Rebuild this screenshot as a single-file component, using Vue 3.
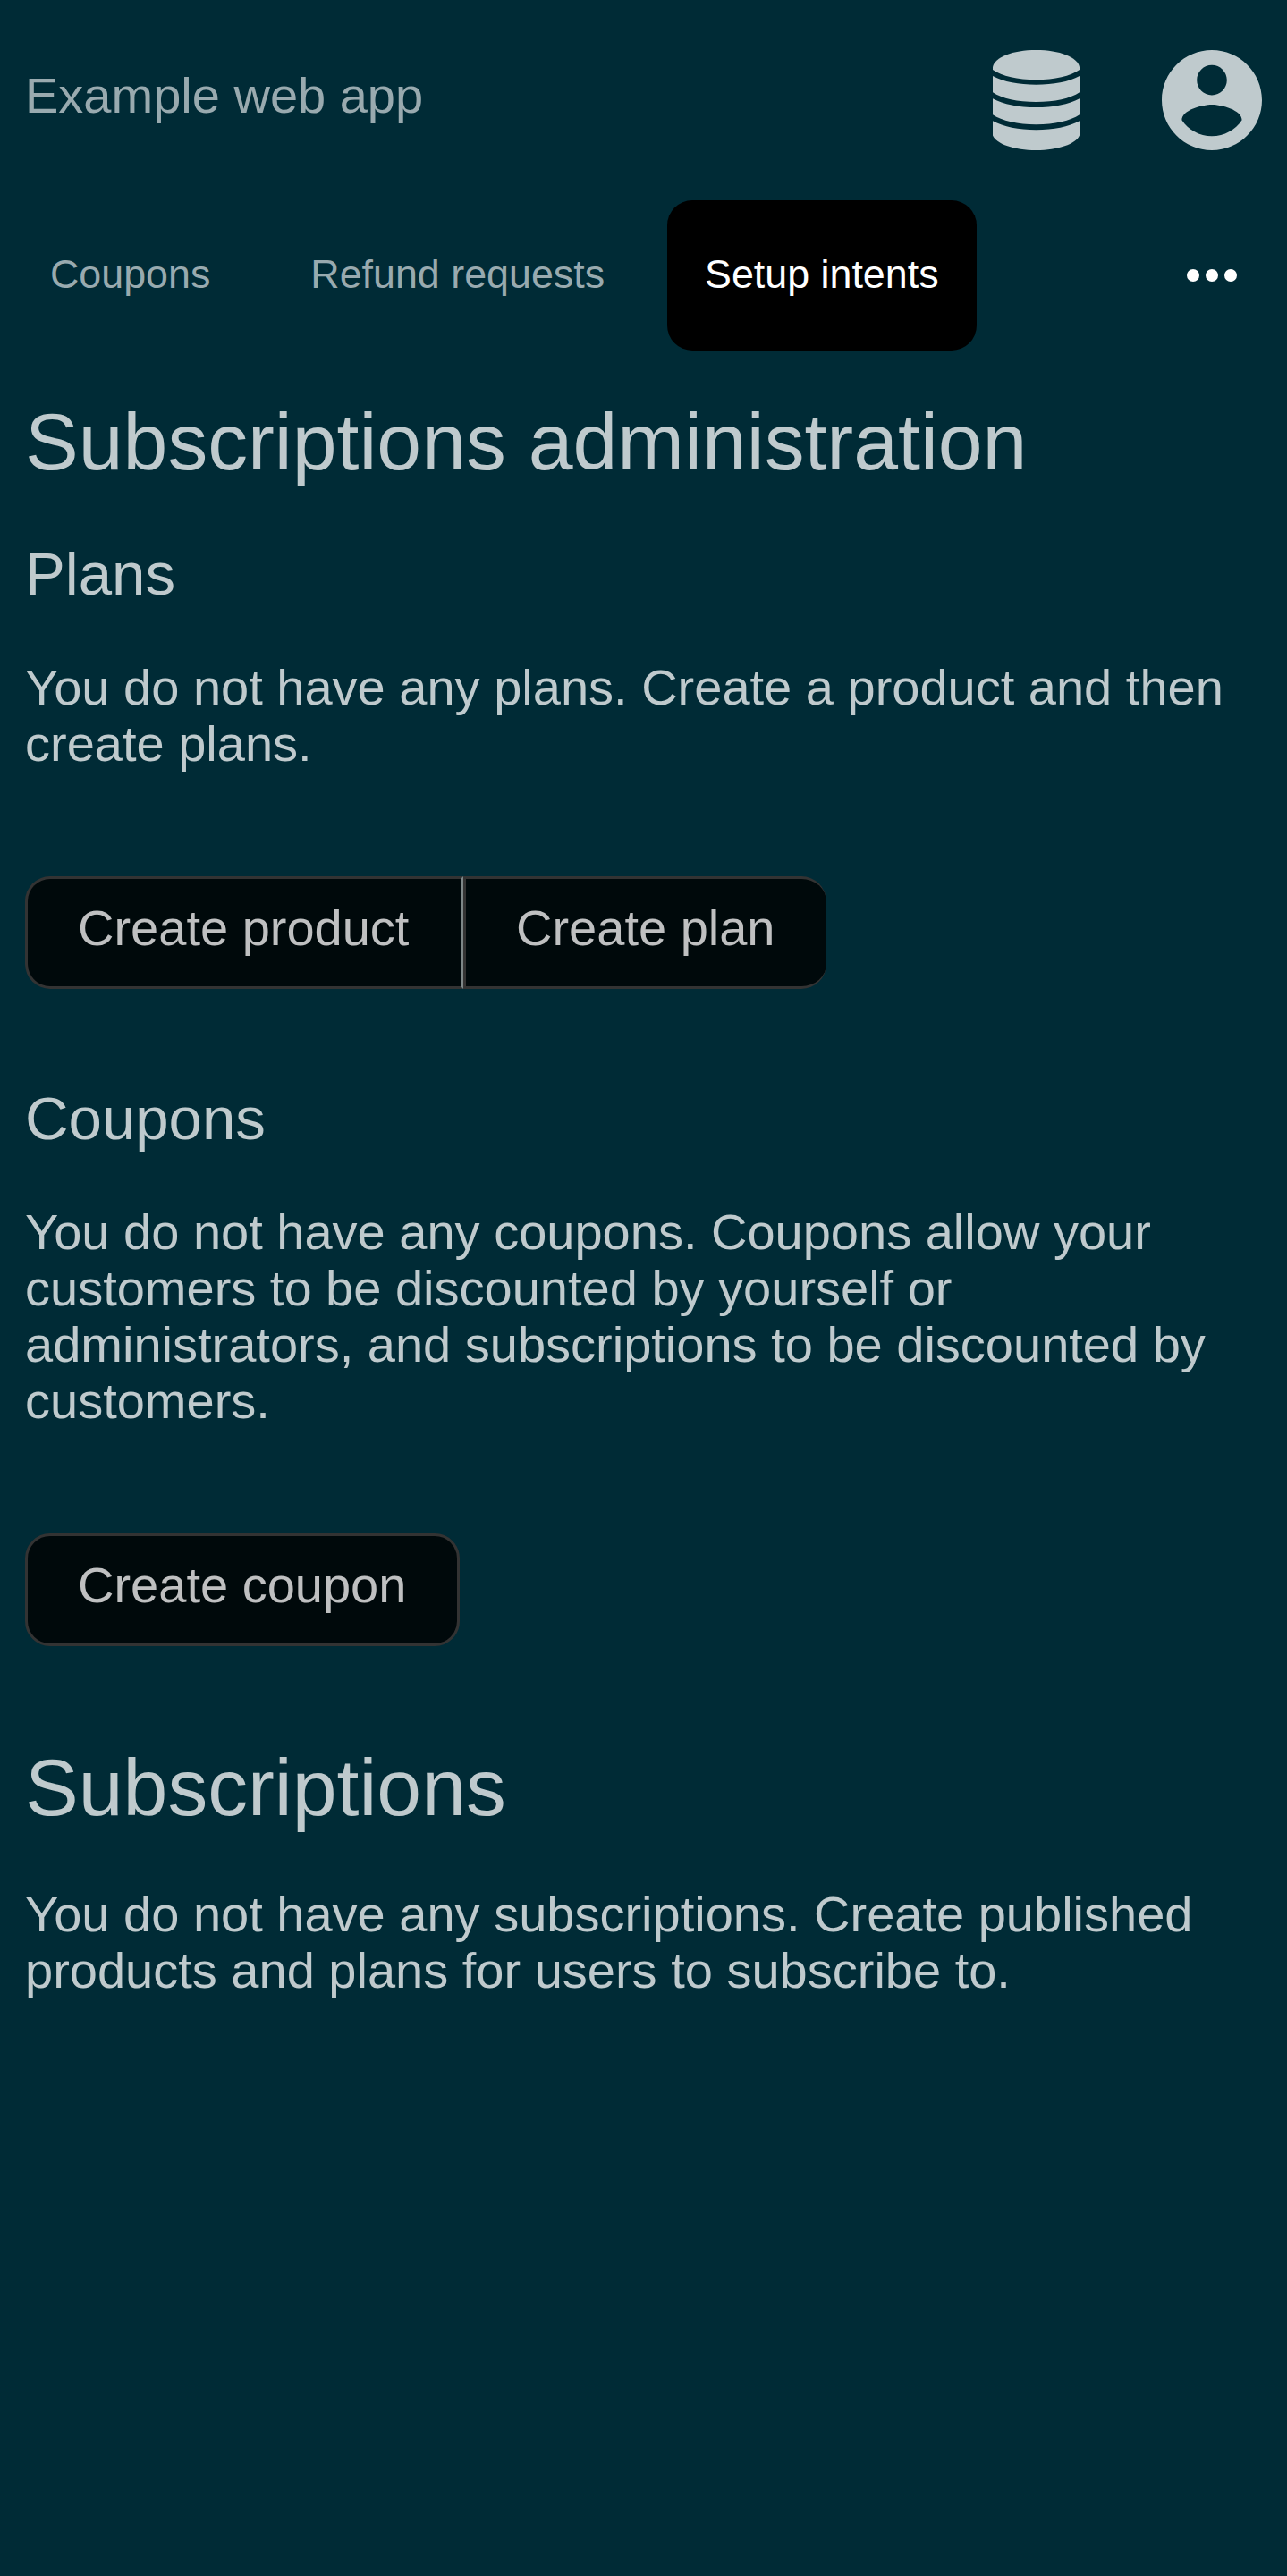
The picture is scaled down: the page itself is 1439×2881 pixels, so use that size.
<script setup>
const navItems = [
  { label: 'Coupons', active: false },
  { label: 'Refund requests', active: false },
  { label: 'Setup intents', active: true },
]
</script>

<template>
  <div class="app">
    <header class="header">
      <span class="brand">Example web app</span>
      <div class="icons">
        <svg class="db" viewBox="0 0 97 112">
          <g fill="currentColor">
            <path d="M0 19C2 8 22 0 48.5 0S95 8 97 19V22C87 29 69 33.3 48.5 33.3S10 29 0 22Z" />
            <path d="M0 29C12 35.500 29 38.700 48.500 38.700S85 35.500 97 29V47.200C87 54 69 58 48.500 58S10 54 0 47.200Z" />
            <path d="M0 54.200C12 60.700 29 64 48.500 64S85 60.700 97 54.200V72.300C87 79 69 83.200 48.500 83.200S10 79 0 72.300Z" />
            <path d="M0 79.300C12 85.800 29 89.200 48.500 89.200S85 85.800 97 79.300V95.500C93 105 73 112 48.500 112S4 105 0 95.500Z" />
          </g>
        </svg>
        <svg class="user" viewBox="2 2 20 20"><path fill="currentColor" d="M12 2C6.480 2 2 6.480 2 12s4.480 10 10 10 10-4.480 10-10S17.520 2 12 2zm0 3c1.660 0 3 1.340 3 3s-1.340 3-3 3-3-1.340-3-3 1.340-3 3-3zm0 14.200c-2.500 0-4.710-1.280-6-3.220.03-1.990 4-3.080 6-3.080 1.990 0 5.970 1.090 6 3.080-1.290 1.940-3.500 3.220-6 3.220z" /></svg>
      </div>
    </header>
    <nav class="nav">
      <a v-for="n in navItems" :key="n.label" class="tab" :class="{ active: n.active }">{{ n.label }}</a>
      <svg class="more" viewBox="0 0 56 14" fill="#fff"><circle cx="7" cy="7" r="7" /><circle cx="28" cy="7" r="7" /><circle cx="49" cy="7" r="7" /></svg>
    </nav>
    <main class="content">
      <h1>Subscriptions administration</h1>
      <h2>Plans</h2>
      <p>You do not have any plans. Create a product and then create plans.</p>
      <div class="buttons">
        <a class="product">Create product</a>
        <a class="plan">Create plan</a>
      </div>
      <h2>Coupons</h2>
      <p>You do not have any coupons. Coupons allow your customers to be discounted by yourself or administrators, and subscriptions to be discounted by customers.</p>
      <div class="buttons last"><a class="coupon">Create coupon</a></div>
      <h1>Subscriptions</h1>
      <p class="after-title">You do not have any subscriptions. Create published products and plans for users to subscribe to.</p>
    </main>
  </div>
</template>

<style>
body { margin: 0; background: #002b36; }
</style>
<style scoped>
.app { box-sizing: border-box; min-height: 2881px; background: #002b36; color: #bfcacd; font: 56px/63px "Liberation Sans", Arial, sans-serif; }
.header { display: flex; justify-content: space-between; align-items: flex-start; height: 224px; padding: 56px 28px 0; box-sizing: border-box; }
.brand { color: #99aaaf; margin-top: 19px; }
.icons { display: flex; gap: 92px; }
.db { display: block; width: 97px; height: 112px; }
.user { display: block; width: 112px; height: 112px; }
.nav { display: flex; align-items: center; height: 168px; padding-right: 56px; }
.tab { box-sizing: border-box; height: 168px; font-size: 44.8px; padding: 0 56px; line-height: 164px; color: #99aaaf; white-space: nowrap; }
.tab.active { background: #000; color: #fff; border-radius: 28px; padding: 0 42px; margin-left: 14px; }
.more { width: 56px; height: 14px; margin-left: auto; }
.content { padding: 51px 28px 0; }
h1 { font-size: 89.6px; line-height: 102px; font-weight: 400; margin: 0 0 58px; }
h2 { font-size: 67.2px; line-height: 77px; font-weight: 400; margin: 0 0 57px; }
p { margin: 0 0 117px; }
.after-title { margin: 59px 0 0; }
.buttons { display: flex; margin-bottom: 106px; }
.buttons.last { margin-bottom: 107px; }
.buttons a { box-sizing: border-box; height: 126px; border: 3px solid #333; background: #00090b; color: #bfc0c1; padding: 23px 0 0 56px; white-space: nowrap; }
.product { width: 490px; border-radius: 28px 0 0 28px; }
.buttons a.product { border-right-color: #7e8788; }
.plan { width: 406px; border-radius: 0 28px 28px 0; }
.buttons a.plan { border-right-width: 0; }
.coupon { width: 486px; border-radius: 28px; }
</style>
